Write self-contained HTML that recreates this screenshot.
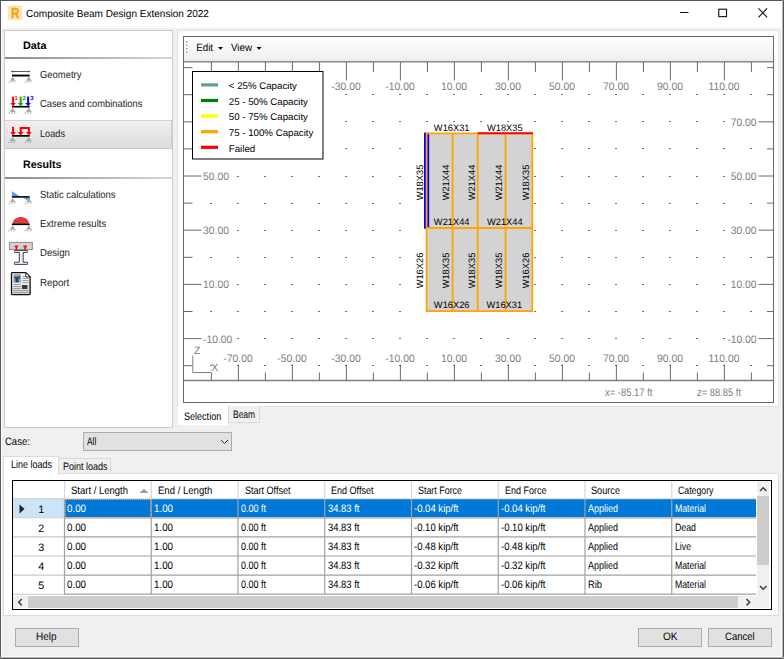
<!DOCTYPE html>
<html><head><meta charset="utf-8"><title>Composite Beam Design Extension 2022</title>
<style>
*{box-sizing:border-box;margin:0;padding:0}
html,body{width:784px;height:659px;overflow:hidden;background:#f0f0f0;font-family:"Liberation Sans",sans-serif;font-size:11px;color:#000;text-rendering:geometricPrecision}
.a{position:absolute}
.t{position:absolute;white-space:nowrap;line-height:1;transform-origin:0 0}
#win{position:absolute;left:0;top:0;width:784px;height:659px;background:#f0f0f0}
#title{left:1px;top:1px;width:781px;height:27px;background:#fff}
.btn{position:absolute;height:19px;width:64px;background:#e1e1e1;border:1px solid #adadad}
</style></head><body>
<div id="win">
<!-- window borders -->
<div class="a" style="left:1px;top:1px;width:1px;height:656px;background:#fafafa"></div>
<div class="a" style="left:781px;top:1px;width:1px;height:656px;background:#fafafa"></div>
<div class="a" style="left:1px;top:656px;width:781px;height:1px;background:#fafafa"></div>
<div class="a" style="left:0;top:0;width:784px;height:1px;background:#555"></div>
<div class="a" style="left:0;top:0;width:1px;height:659px;background:#5a5a5a"></div>
<div class="a" style="left:782px;top:0;width:1px;height:659px;background:#b4b4b4"></div><div class="a" style="left:783px;top:0;width:1px;height:659px;background:#565656"></div>
<div class="a" style="left:0;top:657px;width:784px;height:1px;background:#b4b4b4"></div><div class="a" style="left:0;top:658px;width:784px;height:1px;background:#565656"></div>
<div id="title" class="a"></div>
<!-- title icon -->
<svg class="a" style="left:8px;top:6px" width="14" height="14" viewBox="0 0 14 14"><rect width="14" height="14" fill="#fde4ba"/><text x="2.900" y="12" font-family="Liberation Sans,sans-serif" font-weight="bold" font-size="14.500" textLength="8.400" lengthAdjust="spacingAndGlyphs" fill="#f3a712" stroke="#f3a712" stroke-width="0.400">R</text></svg>
<!-- caption buttons -->
<svg class="a" style="left:670px;top:0" width="112" height="27" viewBox="670 0 112 27" fill="none" stroke="#111" stroke-width="1">
<path d="M680 12.500h8.500"/><rect x="718.800" y="9.200" width="7.700" height="7.400" stroke-width="1.100"/><path d="M758.500 8.300l8.600 9M767.100 8.300l-8.600 9" stroke-width="1.100"/></svg>

<!-- LEFT PANEL -->
<div class="a" id="lp" style="left:4px;top:30px;width:169px;height:398px;background:#fff;border:1px solid #cbcbcb"></div>
<div class="a" style="left:5px;top:57px;width:167px;height:2px;background:linear-gradient(90deg,#8c8c8c,#d8d8d8)"></div>
<div class="a" style="left:5px;top:120px;width:167px;height:29px;background:linear-gradient(#f0f0f0,#dddddd);border-top:1px solid #d2d2d2;border-bottom:1px solid #c8c8c8;border-right:1px solid #cfcfcf"></div>
<div class="a" style="left:5px;top:177px;width:167px;height:2px;background:linear-gradient(90deg,#8c8c8c,#d8d8d8)"></div>
<svg class="a" style="left:6px;top:60px" width="34" height="240" viewBox="6 60 34 240" font-family="Liberation Sans,sans-serif">
<path d="M11.500 71.500H30" stroke="#4a4a4a" stroke-width="0.900" fill="none"/><path d="M11 71.500l1.800-1.300v2.600zM30.400 71.500l-1.800-1.300v2.600z" fill="#4a4a4a"/>
<rect x="12" y="74.600" width="17.700" height="1.900" fill="#000"/>
<path d="M12.6 76.6L9.80 80.80H15.40Z" fill="#a9a9a9"/><path d="M10.10 80.60l-1.600 2.200M12.80 80.60l-1.600 2.200M15.40 80.60l-1.600 2.200" stroke="#a4a4a4" stroke-width="0.900" fill="none"/><path d="M28.8 76.6L26.00 80.80H31.60Z" fill="#a9a9a9"/><path d="M26.30 80.60l-1.600 2.200M29.00 80.60l-1.600 2.200M31.60 80.60l-1.600 2.200" stroke="#a4a4a4" stroke-width="0.900" fill="none"/>
<path d="M13.1 96.6V103.50" stroke="#ff0000" stroke-width="2.000" fill="none"/><path d="M10.25 103.00H15.95L13.1 106.3Z" fill="#ff0000"/><path d="M20.6 96.6V103.50" stroke="#1fa51f" stroke-width="2.000" fill="none"/><path d="M17.75 103.00H23.45L20.6 106.3Z" fill="#1fa51f"/><path d="M28.1 96.6V103.50" stroke="#0000ff" stroke-width="2.000" fill="none"/><path d="M25.25 103.00H30.95L28.1 106.3Z" fill="#0000ff"/>
<rect x="12" y="105.900" width="17.700" height="1.600" fill="#000"/>
<g font-size="6" font-weight="bold"><text x="14.600" y="100" fill="#ff0000">1</text><text x="22.500" y="99.700" fill="#1fa51f">2</text><text x="30.300" y="99.700" fill="#0000ff">3</text></g>
<path d="M12.6 107.7L9.80 111.90H15.40Z" fill="#a9a9a9"/><path d="M10.10 111.70l-1.600 2.200M12.80 111.70l-1.600 2.200M15.40 111.70l-1.600 2.200" stroke="#a4a4a4" stroke-width="0.900" fill="none"/><path d="M28.8 107.7L26.00 111.90H31.60Z" fill="#a9a9a9"/><path d="M26.30 111.70l-1.600 2.200M29.00 111.70l-1.600 2.200M31.60 111.70l-1.600 2.200" stroke="#a4a4a4" stroke-width="0.900" fill="none"/>
<path d="M13.1 126.8V132.60" stroke="#ff0000" stroke-width="2.000" fill="none"/><path d="M10.25 132.10H15.95L13.1 135.4Z" fill="#ff0000"/>
<path d="M20.700 132.500V127.900H28.900V132.500" stroke="#ff0000" stroke-width="2" fill="none"/>
<path d="M17.850 132.100H23.550L20.700 135.400ZM26.050 132.100H31.750L28.900 135.400Z" fill="#ff0000"/>
<rect x="12" y="135" width="17.700" height="1.700" fill="#000"/>
<path d="M12.6 136.9L9.80 141.10H15.40Z" fill="#a9a9a9"/><path d="M10.10 140.90l-1.600 2.200M12.80 140.90l-1.600 2.200M15.40 140.90l-1.600 2.200" stroke="#a4a4a4" stroke-width="0.900" fill="none"/><path d="M28.8 136.9L26.00 141.10H31.60Z" fill="#a9a9a9"/><path d="M26.30 140.90l-1.600 2.200M29.00 140.90l-1.600 2.200M31.60 140.90l-1.600 2.200" stroke="#a4a4a4" stroke-width="0.900" fill="none"/>
<path d="M11.900 191.200V196.300H19.800Z" fill="#4da3f5"/><path d="M30 197.500V202L22.500 197.500Z" fill="#4da3f5"/>
<rect x="11.900" y="196.100" width="17.700" height="1.600" fill="#000"/>
<path d="M12.6 197.9L9.80 202.10H15.40Z" fill="#a9a9a9"/><path d="M10.10 201.90l-1.600 2.200M12.80 201.90l-1.600 2.200M15.40 201.90l-1.600 2.200" stroke="#a4a4a4" stroke-width="0.900" fill="none"/><path d="M28.8 197.9L26.00 202.10H31.60Z" fill="#a9a9a9"/><path d="M26.30 201.90l-1.600 2.200M29.00 201.90l-1.600 2.200M31.60 201.90l-1.600 2.200" stroke="#a4a4a4" stroke-width="0.900" fill="none"/>
<path d="M12.600 223.700C13.300 214.900 28.300 214.900 29 223.700Z" fill="#e23a3a"/>
<rect x="11.900" y="223.500" width="17.700" height="1.600" fill="#000"/>
<path d="M12.6 225.3L9.80 229.50H15.40Z" fill="#a9a9a9"/><path d="M10.10 229.30l-1.600 2.200M12.80 229.30l-1.600 2.200M15.40 229.30l-1.600 2.200" stroke="#a4a4a4" stroke-width="0.900" fill="none"/><path d="M28.8 225.3L26.00 229.50H31.60Z" fill="#a9a9a9"/><path d="M26.30 229.30l-1.600 2.200M29.00 229.30l-1.600 2.200M31.60 229.30l-1.600 2.200" stroke="#a4a4a4" stroke-width="0.900" fill="none"/>
<rect x="9.400" y="242.400" width="22.900" height="7.200" fill="#d2d2d2" stroke="#8a8a8a" stroke-width="1"/>
<path d="M14.600 245.600h3.600v1.700h-1v3.200h-1.600v-3.200h-1zM23.400 245.600h3.600v1.700h-1v3.200h-1.600v-3.200h-1z" fill="#f01010"/>
<path d="M14.700 250.400H27.400Q28 251.400 27.400 252.400H23.200V262.200H27.400Q28 263.300 27.400 264.400H14.700Q14.100 263.300 14.700 262.200H19.300V252.400H14.700Q14.100 251.400 14.700 250.400Z" fill="#eef0f4" stroke="#3a4152" stroke-width="1"/>
<defs><linearGradient id="pg" x1="0" y1="0" x2="0" y2="1"><stop offset="0" stop-color="#ffffff"/><stop offset="1" stop-color="#d4d4d4"/></linearGradient></defs>
<path d="M12.300 272.600H25.800L30.100 277V293.800Q30.100 294.600 29.300 294.600H12.300Q11.500 294.600 11.500 293.800V273.400Q11.500 272.600 12.300 272.600Z" fill="url(#pg)" stroke="#111" stroke-width="1.300"/>
<path d="M25.800 272.600V277H30.100Z" fill="#fff" stroke="#111" stroke-width="0.900"/>
<rect x="13.400" y="274.200" width="7.600" height="8.400" fill="#8aa4c4"/><path d="M14.500 276.500h5.500v2h-1.500v3.800h-3v-3.800h-1z" fill="#2d3f66"/><rect x="15.300" y="274.600" width="3" height="2" fill="#c49a7c"/>
<path d="M22.300 276.500H25M22.300 278.500H28.500M22.300 280.500H28.500M22.300 282.500H28.500M13.400 284.500H21M13.400 286.500H21M13.400 288.500H21M13.400 290.500H28.500M13.400 292.500H28.500" stroke="#8c8c8c" stroke-width="0.800" fill="none"/>
<rect x="22" y="285" width="5.500" height="4" fill="#3a3a3a"/>
</svg>

<!-- RIGHT PANEL -->
<div class="a" style="left:177px;top:30px;width:602px;height:377px;background:#fff;border:1px solid #e3e3e3"></div>
<svg class="a" style="left:183px;top:36px" width="592" height="368" viewBox="183 36 592 368" font-family="Liberation Sans,sans-serif">
<defs><linearGradient id="tbg" x1="0" y1="0" x2="0" y2="1"><stop offset="0" stop-color="#ffffff"/><stop offset="1" stop-color="#eeeeee"/></linearGradient></defs>
<rect x="183.500" y="36.500" width="590" height="366" fill="#fff" stroke="#6a6a6a" stroke-width="1"/>
<rect x="184" y="37" width="589" height="24" fill="url(#tbg)"/>
<rect x="184" y="61" width="589" height="1.500" fill="#8a8a8a"/>
<rect x="186" y="41.00" width="1.500" height="1.500" fill="#a8a8a8"/>
<rect x="186" y="44.50" width="1.500" height="1.500" fill="#a8a8a8"/>
<rect x="186" y="48.00" width="1.500" height="1.500" fill="#a8a8a8"/>
<rect x="186" y="51.50" width="1.500" height="1.500" fill="#a8a8a8"/>
<path d="M210 365h2v1h-2zM210 311h2v1h-2zM210 257h2v1h-2zM210 203h2v1h-2zM210 148h2v1h-2zM210 94h2v1h-2zM237 365h2v1h-2zM237 338h2v1h-2zM237 311h2v1h-2zM237 284h2v1h-2zM237 257h2v1h-2zM237 230h2v1h-2zM237 203h2v1h-2zM237 176h2v1h-2zM237 148h2v1h-2zM237 121h2v1h-2zM237 94h2v1h-2zM264 365h2v1h-2zM264 338h2v1h-2zM264 311h2v1h-2zM264 284h2v1h-2zM264 257h2v1h-2zM264 230h2v1h-2zM264 203h2v1h-2zM264 176h2v1h-2zM264 148h2v1h-2zM264 121h2v1h-2zM264 94h2v1h-2zM291 365h2v1h-2zM291 338h2v1h-2zM291 311h2v1h-2zM291 284h2v1h-2zM291 257h2v1h-2zM291 230h2v1h-2zM291 203h2v1h-2zM291 176h2v1h-2zM291 148h2v1h-2zM291 121h2v1h-2zM291 94h2v1h-2zM318 365h2v1h-2zM318 338h2v1h-2zM318 311h2v1h-2zM318 284h2v1h-2zM318 257h2v1h-2zM318 230h2v1h-2zM318 203h2v1h-2zM318 176h2v1h-2zM318 148h2v1h-2zM318 121h2v1h-2zM318 94h2v1h-2zM345 365h2v1h-2zM345 338h2v1h-2zM345 311h2v1h-2zM345 284h2v1h-2zM345 257h2v1h-2zM345 230h2v1h-2zM345 203h2v1h-2zM345 176h2v1h-2zM345 148h2v1h-2zM345 121h2v1h-2zM345 94h2v1h-2zM372 365h2v1h-2zM372 338h2v1h-2zM372 311h2v1h-2zM372 284h2v1h-2zM372 257h2v1h-2zM372 230h2v1h-2zM372 203h2v1h-2zM372 176h2v1h-2zM372 148h2v1h-2zM372 121h2v1h-2zM372 94h2v1h-2zM399 365h2v1h-2zM399 338h2v1h-2zM399 311h2v1h-2zM399 284h2v1h-2zM399 257h2v1h-2zM399 230h2v1h-2zM399 203h2v1h-2zM399 176h2v1h-2zM399 148h2v1h-2zM399 121h2v1h-2zM399 94h2v1h-2zM426 365h2v1h-2zM426 338h2v1h-2zM426 311h2v1h-2zM426 284h2v1h-2zM426 257h2v1h-2zM426 230h2v1h-2zM426 203h2v1h-2zM426 176h2v1h-2zM426 148h2v1h-2zM426 121h2v1h-2zM426 94h2v1h-2zM453 365h2v1h-2zM453 338h2v1h-2zM453 311h2v1h-2zM453 284h2v1h-2zM453 257h2v1h-2zM453 230h2v1h-2zM453 203h2v1h-2zM453 176h2v1h-2zM453 148h2v1h-2zM453 121h2v1h-2zM453 94h2v1h-2zM480 365h2v1h-2zM480 338h2v1h-2zM480 311h2v1h-2zM480 284h2v1h-2zM480 257h2v1h-2zM480 230h2v1h-2zM480 203h2v1h-2zM480 176h2v1h-2zM480 148h2v1h-2zM480 121h2v1h-2zM480 94h2v1h-2zM507 365h2v1h-2zM507 338h2v1h-2zM507 311h2v1h-2zM507 284h2v1h-2zM507 257h2v1h-2zM507 230h2v1h-2zM507 203h2v1h-2zM507 176h2v1h-2zM507 148h2v1h-2zM507 121h2v1h-2zM507 94h2v1h-2zM534 365h2v1h-2zM534 338h2v1h-2zM534 311h2v1h-2zM534 284h2v1h-2zM534 257h2v1h-2zM534 230h2v1h-2zM534 203h2v1h-2zM534 176h2v1h-2zM534 148h2v1h-2zM534 121h2v1h-2zM534 94h2v1h-2zM561 365h2v1h-2zM561 338h2v1h-2zM561 311h2v1h-2zM561 284h2v1h-2zM561 257h2v1h-2zM561 230h2v1h-2zM561 203h2v1h-2zM561 176h2v1h-2zM561 148h2v1h-2zM561 121h2v1h-2zM561 94h2v1h-2zM588 365h2v1h-2zM588 338h2v1h-2zM588 311h2v1h-2zM588 284h2v1h-2zM588 257h2v1h-2zM588 230h2v1h-2zM588 203h2v1h-2zM588 176h2v1h-2zM588 148h2v1h-2zM588 121h2v1h-2zM588 94h2v1h-2zM615 365h2v1h-2zM615 338h2v1h-2zM615 311h2v1h-2zM615 284h2v1h-2zM615 257h2v1h-2zM615 230h2v1h-2zM615 203h2v1h-2zM615 176h2v1h-2zM615 148h2v1h-2zM615 121h2v1h-2zM615 94h2v1h-2zM642 365h2v1h-2zM642 338h2v1h-2zM642 311h2v1h-2zM642 284h2v1h-2zM642 257h2v1h-2zM642 230h2v1h-2zM642 203h2v1h-2zM642 176h2v1h-2zM642 148h2v1h-2zM642 121h2v1h-2zM642 94h2v1h-2zM669 365h2v1h-2zM669 338h2v1h-2zM669 311h2v1h-2zM669 284h2v1h-2zM669 257h2v1h-2zM669 230h2v1h-2zM669 203h2v1h-2zM669 176h2v1h-2zM669 148h2v1h-2zM669 121h2v1h-2zM669 94h2v1h-2zM696 365h2v1h-2zM696 338h2v1h-2zM696 311h2v1h-2zM696 284h2v1h-2zM696 257h2v1h-2zM696 230h2v1h-2zM696 203h2v1h-2zM696 176h2v1h-2zM696 148h2v1h-2zM696 121h2v1h-2zM696 94h2v1h-2zM723 365h2v1h-2zM723 338h2v1h-2zM723 311h2v1h-2zM723 284h2v1h-2zM723 257h2v1h-2zM723 230h2v1h-2zM723 203h2v1h-2zM723 176h2v1h-2zM723 148h2v1h-2zM723 121h2v1h-2zM723 94h2v1h-2zM750 365h2v1h-2zM750 311h2v1h-2zM750 257h2v1h-2zM750 203h2v1h-2zM750 148h2v1h-2zM750 94h2v1h-2z" fill="#707070"/>
<path d="M184 380.500H773" stroke="#808080" stroke-width="1.300" fill="none"/>
<path d="M211.40 62V72M211.40 380V372.500M238.40 62V80.500M238.40 380V364.500M265.40 62V72M265.40 380V372.500M292.40 62V80.500M292.40 380V364.500M319.40 62V72M319.40 380V372.500M346.40 62V80.500M346.40 380V364.500M373.40 62V72M373.40 380V372.500M400.40 62V80.500M400.40 380V364.500M427.40 62V72M427.40 380V372.500M454.40 62V80.500M454.40 380V364.500M481.40 62V72M481.40 380V372.500M508.40 62V80.500M508.40 380V364.500M535.40 62V72M535.40 380V372.500M562.40 62V80.500M562.40 380V364.500M589.40 62V72M589.40 380V372.500M616.40 62V80.500M616.40 380V364.500M643.40 62V72M643.40 380V372.500M670.40 62V80.500M670.40 380V364.500M697.40 62V72M697.40 380V372.500M724.40 62V80.500M724.40 380V364.500M751.40 62V72M751.40 380V372.500M184 365.70H192.500M773 365.70H767M184 338.60H201.500M773 338.60H758.500M184 311.50H192.500M773 311.50H767M184 284.40H201.500M773 284.40H758.500M184 257.30H192.500M773 257.30H767M184 230.20H201.500M773 230.20H758.500M184 203.10H192.500M773 203.10H767M184 176.00H201.500M773 176.00H758.500M184 148.90H192.500M773 148.90H767M184 121.80H201.500M773 121.80H758.500M184 94.70H192.500M773 94.70H767M184 67.60H192.500M773 67.60H767" stroke="#6a6a6a" stroke-width="1" fill="none"/>
<g fill="#808080">
<text x="346.00" y="90.00" font-size="10.9" textLength="29.36" lengthAdjust="spacingAndGlyphs" text-anchor="middle">-30.00</text>
<text x="400.00" y="90.00" font-size="10.9" textLength="29.36" lengthAdjust="spacingAndGlyphs" text-anchor="middle">-10.00</text>
<text x="454.00" y="90.00" font-size="10.9" textLength="25.91" lengthAdjust="spacingAndGlyphs" text-anchor="middle">10.00</text>
<text x="508.00" y="90.00" font-size="10.9" textLength="25.91" lengthAdjust="spacingAndGlyphs" text-anchor="middle">30.00</text>
<text x="562.00" y="90.00" font-size="10.9" textLength="25.91" lengthAdjust="spacingAndGlyphs" text-anchor="middle">50.00</text>
<text x="616.00" y="90.00" font-size="10.9" textLength="25.91" lengthAdjust="spacingAndGlyphs" text-anchor="middle">70.00</text>
<text x="670.00" y="90.00" font-size="10.9" textLength="25.91" lengthAdjust="spacingAndGlyphs" text-anchor="middle">90.00</text>
<text x="724.00" y="90.00" font-size="10.9" textLength="30.90" lengthAdjust="spacingAndGlyphs" text-anchor="middle">110.00</text>
<text x="238.00" y="361.70" font-size="10.9" textLength="29.36" lengthAdjust="spacingAndGlyphs" text-anchor="middle">-70.00</text>
<text x="292.00" y="361.70" font-size="10.9" textLength="29.36" lengthAdjust="spacingAndGlyphs" text-anchor="middle">-50.00</text>
<text x="346.00" y="361.70" font-size="10.9" textLength="29.36" lengthAdjust="spacingAndGlyphs" text-anchor="middle">-30.00</text>
<text x="400.00" y="361.70" font-size="10.9" textLength="29.36" lengthAdjust="spacingAndGlyphs" text-anchor="middle">-10.00</text>
<text x="454.00" y="361.70" font-size="10.9" textLength="25.91" lengthAdjust="spacingAndGlyphs" text-anchor="middle">10.00</text>
<text x="508.00" y="361.70" font-size="10.9" textLength="25.91" lengthAdjust="spacingAndGlyphs" text-anchor="middle">30.00</text>
<text x="562.00" y="361.70" font-size="10.9" textLength="25.91" lengthAdjust="spacingAndGlyphs" text-anchor="middle">50.00</text>
<text x="616.00" y="361.70" font-size="10.9" textLength="25.91" lengthAdjust="spacingAndGlyphs" text-anchor="middle">70.00</text>
<text x="670.00" y="361.70" font-size="10.9" textLength="25.91" lengthAdjust="spacingAndGlyphs" text-anchor="middle">90.00</text>
<text x="724.00" y="361.70" font-size="10.9" textLength="30.90" lengthAdjust="spacingAndGlyphs" text-anchor="middle">110.00</text>
<text x="756.60" y="125.70" font-size="10.9" textLength="25.91" lengthAdjust="spacingAndGlyphs" text-anchor="end">70.00</text>
<text x="203.00" y="179.90" font-size="10.9" textLength="25.91" lengthAdjust="spacingAndGlyphs">50.00</text>
<text x="756.60" y="179.90" font-size="10.9" textLength="25.91" lengthAdjust="spacingAndGlyphs" text-anchor="end">50.00</text>
<text x="203.00" y="234.10" font-size="10.9" textLength="25.91" lengthAdjust="spacingAndGlyphs">30.00</text>
<text x="756.60" y="234.10" font-size="10.9" textLength="25.91" lengthAdjust="spacingAndGlyphs" text-anchor="end">30.00</text>
<text x="203.00" y="288.30" font-size="10.9" textLength="25.91" lengthAdjust="spacingAndGlyphs">10.00</text>
<text x="756.60" y="288.30" font-size="10.9" textLength="25.91" lengthAdjust="spacingAndGlyphs" text-anchor="end">10.00</text>
<text x="203.00" y="342.50" font-size="10.9" textLength="29.36" lengthAdjust="spacingAndGlyphs">-10.00</text>
<text x="756.60" y="342.50" font-size="10.9" textLength="29.36" lengthAdjust="spacingAndGlyphs" text-anchor="end">-10.00</text>
<text x="194.00" y="354.30" font-size="10.5">Z</text>
<text x="211.30" y="371.00" font-size="10.5">X</text>
<text x="605.00" y="396.30" font-size="10.9" textLength="47.50" lengthAdjust="spacingAndGlyphs">x= -85.17 ft</text>
<text x="697.00" y="396.30" font-size="10.9" textLength="44.00" lengthAdjust="spacingAndGlyphs">z= 88.85 ft</text>
</g>
<path d="M192.800 355.500V372.500H211" stroke="#808080" stroke-width="1" fill="none"/>
<rect x="426.6" y="133.3" width="105.70" height="177.80" fill="#d3d3d3"/>
<path d="M426.6 132.60V228.70" stroke="#0000ff" stroke-width="5.200"/>
<path d="M426.6 132.60V311.80M452.6 132.60V311.80M477.7 132.60V311.80M505.5 132.60V311.80M532.3 132.60V311.80M425.90 133.3H533.00M425.90 228.0H533.00M425.90 311.1H533.00" stroke="#ffa500" stroke-width="1.800" fill="none"/>
<path d="M477.7 133.3H533.00" stroke="#ff0000" stroke-width="1.900"/>
<g fill="#000">
<text x="451.70" y="130.70" font-size="9.3" text-anchor="middle">W16X31</text>
<text x="504.80" y="130.70" font-size="9.3" text-anchor="middle">W18X35</text>
<text x="451.70" y="225.00" font-size="9.3" text-anchor="middle">W21X44</text>
<text x="504.80" y="225.00" font-size="9.3" text-anchor="middle">W21X44</text>
<text x="451.70" y="308.00" font-size="9.3" text-anchor="middle">W16X26</text>
<text x="504.30" y="308.00" font-size="9.3" text-anchor="middle">W16X31</text>
<text transform="translate(423.30 182.50) rotate(-90)" font-size="9.3" text-anchor="middle">W18X35</text>
<text transform="translate(423.30 270.50) rotate(-90)" font-size="9.3" text-anchor="middle">W16X26</text>
<text transform="translate(449.00 182.50) rotate(-90)" font-size="9.3" text-anchor="middle">W21X44</text>
<text transform="translate(449.00 270.50) rotate(-90)" font-size="9.3" text-anchor="middle">W18X35</text>
<text transform="translate(474.60 182.50) rotate(-90)" font-size="9.3" text-anchor="middle">W21X44</text>
<text transform="translate(474.60 270.50) rotate(-90)" font-size="9.3" text-anchor="middle">W18X35</text>
<text transform="translate(502.30 182.50) rotate(-90)" font-size="9.3" text-anchor="middle">W21X44</text>
<text transform="translate(502.30 270.50) rotate(-90)" font-size="9.3" text-anchor="middle">W18X35</text>
<text transform="translate(529.30 182.50) rotate(-90)" font-size="9.3" text-anchor="middle">W18X35</text>
<text transform="translate(529.30 270.50) rotate(-90)" font-size="9.3" text-anchor="middle">W16X26</text>
</g>
<rect x="192.500" y="71.500" width="130.500" height="87.500" fill="#fff" stroke="#000" stroke-width="1"/>
<g fill="#000">
<rect x="201" y="83.30" width="17" height="3.200" fill="#5f9ea0"/>
<text x="228.80" y="89.30" font-size="9.7">&lt; 25% Capacity</text>
<rect x="201" y="98.90" width="17" height="3.200" fill="#008000"/>
<text x="228.80" y="104.88" font-size="9.7">25 - 50% Capacity</text>
<rect x="201" y="114.50" width="17" height="3.200" fill="#ffff00"/>
<text x="228.80" y="120.46" font-size="9.7">50 - 75% Capacity</text>
<rect x="201" y="130.10" width="17" height="3.200" fill="#ffa500"/>
<text x="228.80" y="136.04" font-size="9.7">75 - 100% Capacity</text>
<rect x="201" y="145.70" width="17" height="3.200" fill="#ff0000"/>
<text x="228.80" y="151.62" font-size="9.7">Failed</text>
</g>
<g fill="#000"><text x="196.20" y="50.60" font-size="10.5" textLength="16.83" lengthAdjust="spacingAndGlyphs">Edit</text><text x="231.00" y="50.60" font-size="10.5" textLength="20.99" lengthAdjust="spacingAndGlyphs">View</text></g>
<path d="M218 47h5l-2.500 2.800zM256.500 47h5l-2.500 2.800z" fill="#000"/>
</svg>

<!-- bottom tabs of right panel -->
<div class="a" style="left:178px;top:406px;width:50px;height:19px;background:#fff"></div>
<div class="a" style="left:228px;top:406px;width:32px;height:17px;background:#f0f0f0;border:1px solid #d9d9d9;border-top:none"></div>

<!-- Case -->
<div class="a" style="left:83px;top:432px;width:149px;height:19px;background:#e1e1e1;border:1px solid #adadad"></div>
<svg class="a" style="left:220px;top:439px" width="10" height="7" viewBox="0 0 10 7" fill="none" stroke="#333" stroke-width="1"><path d="M1 1l3.500 3.500 3.500-3.500"/></svg>

<!-- Lower tab control -->
<div class="a" style="left:3px;top:473px;width:776px;height:143px;background:#fff;border:1px solid #dcdcdc"></div>
<div class="a" style="left:3px;top:456px;width:56px;height:19px;background:#fff;border:1px solid #dcdcdc;border-bottom:none"></div>
<div class="a" style="left:58px;top:458px;width:53px;height:15px;background:#f0f0f0;border:1px solid #d9d9d9;border-bottom:none"></div>
<div class="a" style="left:12px;top:480px;width:760px;height:130px;background:#fff;border:1px solid #000"></div>
<div class="a" style="left:13px;top:499px;width:51px;height:18px;background:#cce4f7"></div>
<div class="a" style="left:65px;top:499px;width:691px;height:18px;background:#0078d7"></div>
<svg class="a" style="left:12px;top:480px" width="760" height="130" viewBox="12 480 760 130"><path d="M64.50 481V498.200M151.25 481V498.200M238.00 481V498.200M324.75 481V498.200M411.50 481V498.200M498.25 481V498.200M585.00 481V498.200M671.75 481V498.200" stroke="#d6d6d6" stroke-width="1.200" fill="none"/><path d="M64.50 498.200V594.80M151.25 498.200V594.80M238.00 498.200V594.80M324.75 498.200V594.80M411.50 498.200V594.80M498.25 498.200V594.80M585.00 498.200V594.80M671.75 498.200V594.80" stroke="#a2a2a2" stroke-width="1.200" fill="none"/><path d="M13 498.70H64M13 517.80H64M13 536.90H64M13 556.00H64M13 575.10H64M13 594.20H64" stroke="#cacaca" stroke-width="1.100" fill="none"/><path d="M64 517.80H756M64 536.90H756M64 556.00H756M64 575.10H756M64 594.20H756" stroke="#a2a2a2" stroke-width="1.200" fill="none"/><path d="M64 498.700H756" stroke="#d6d6d6" stroke-width="1.100" fill="none"/></svg>
<div class="a" style="left:65px;top:499px;width:86px;height:19px;border:1px dotted #e8a66a"></div>
<svg class="a" style="left:139px;top:488px" width="10" height="6" viewBox="0 0 10 6"><path d="M0.500 5L5 0.500L9.500 5z" fill="#a0a0a0"/></svg>
<svg class="a" style="left:19px;top:504px" width="6" height="10" viewBox="0 0 6 10"><path d="M0.500 0.500L5.500 5L0.500 9.500z" fill="#222"/></svg>
<div class="a" style="left:757px;top:481px;width:12px;height:115px;background:#f0f0f0"></div>
<div class="a" style="left:757px;top:496px;width:12px;height:69px;background:#cdcdcd"></div>
<div class="a" style="left:13px;top:596px;width:756px;height:12px;background:#f0f0f0"></div>
<div class="a" style="left:28px;top:596px;width:710px;height:12px;background:#cdcdcd"></div>
<svg class="a" style="left:757px;top:481px" width="12" height="115" viewBox="0 0 12 115" fill="none" stroke="#404040" stroke-width="1.500"><path d="M3 10l3.200-3.200 3.200 3.200M3 105l3.200 3.200 3.200-3.200"/></svg>
<svg class="a" style="left:13px;top:596px" width="744" height="12" viewBox="0 0 744 12" fill="none" stroke="#404040" stroke-width="1.500"><path d="M8.800 3l-3.200 3.200 3.200 3.200M733.500 3l3.200 3.200-3.200 3.200"/></svg>

<!-- Buttons -->
<div class="btn" style="left:15px;top:628px"></div>
<div class="btn" style="left:638px;top:628px"></div>
<div class="btn" style="left:708px;top:628px"></div>
<div class="t" style="left:26.00px;top:10.00px;font-size:10.3px;transform:scaleX(0.9745)">Composite Beam Design Extension 2022</div>
<div class="t" style="left:23.00px;top:41.00px;font-size:10.8px;font-weight:bold;transform:scaleX(1.0040)">Data</div>
<div class="t" style="left:23.00px;top:160.00px;font-size:10.8px;font-weight:bold;transform:scaleX(0.9869)">Results</div>
<div class="t" style="left:40.20px;top:71.00px;font-size:10.3px;color:#1e1e1e;transform:scaleX(0.9178)">Geometry</div>
<div class="t" style="left:40.00px;top:100.00px;font-size:10.3px;color:#1e1e1e;transform:scaleX(0.9079)">Cases and combinations</div>
<div class="t" style="left:40.00px;top:130.00px;font-size:10.3px;color:#1e1e1e;transform:scaleX(0.8909)">Loads</div>
<div class="t" style="left:40.10px;top:191.00px;font-size:10.3px;color:#1e1e1e;transform:scaleX(0.9171)">Static calculations</div>
<div class="t" style="left:40.00px;top:220.00px;font-size:10.3px;color:#1e1e1e;transform:scaleX(0.9253)">Extreme results</div>
<div class="t" style="left:40.00px;top:249.00px;font-size:10.3px;color:#1e1e1e;transform:scaleX(0.9326)">Design</div>
<div class="t" style="left:40.00px;top:279.00px;font-size:10.3px;color:#1e1e1e;transform:scaleX(0.9478)">Report</div>
<div class="t" style="left:184.00px;top:412.00px;font-size:10.8px;transform:scaleX(0.8373)">Selection</div>
<div class="t" style="left:232.90px;top:410.00px;font-size:10.8px;transform:scaleX(0.7834)">Beam</div>
<div class="t" style="left:5.20px;top:437.00px;font-size:10.8px;transform:scaleX(0.8791)">Case:</div>
<div class="t" style="left:86.70px;top:437.00px;font-size:10.8px;transform:scaleX(0.7748)">All</div>
<div class="t" style="left:10.70px;top:460.00px;font-size:10.8px;transform:scaleX(0.8307)">Line loads</div>
<div class="t" style="left:62.50px;top:462.00px;font-size:10.8px;transform:scaleX(0.8328)">Point loads</div>
<div class="t" style="left:36.00px;top:632.00px;font-size:10.8px;transform:scaleX(0.9230)">Help</div>
<div class="t" style="left:663.00px;top:632.00px;font-size:10.8px;transform:scaleX(0.9292)">OK</div>
<div class="t" style="left:724.70px;top:632.00px;font-size:10.8px;transform:scaleX(0.8835)">Cancel</div>
<div class="t" style="left:71.00px;top:486.00px;font-size:10.8px;transform:scaleX(0.8791)">Start / Length</div>
<div class="t" style="left:157.50px;top:486.00px;font-size:10.8px;transform:scaleX(0.8850)">End / Length</div>
<div class="t" style="left:244.50px;top:486.00px;font-size:10.8px;transform:scaleX(0.8361)">Start Offset</div>
<div class="t" style="left:331.00px;top:486.00px;font-size:10.8px;transform:scaleX(0.8362)">End Offset</div>
<div class="t" style="left:418.00px;top:486.00px;font-size:10.8px;transform:scaleX(0.8238)">Start Force</div>
<div class="t" style="left:504.50px;top:486.00px;font-size:10.8px;transform:scaleX(0.8330)">End Force</div>
<div class="t" style="left:591.00px;top:486.00px;font-size:10.8px;transform:scaleX(0.8475)">Source</div>
<div class="t" style="left:677.50px;top:486.00px;font-size:10.8px;transform:scaleX(0.8101)">Category</div>
<div class="t" style="left:38.30px;top:505.00px;font-size:10.8px">1</div>
<div class="t" style="left:67.00px;top:504.00px;font-size:10.8px;color:#fff;transform:scaleX(0.9040)">0.00</div>
<div class="t" style="left:154.00px;top:504.00px;font-size:10.8px;color:#fff;transform:scaleX(0.9040)">1.00</div>
<div class="t" style="left:241.00px;top:504.00px;font-size:10.8px;color:#fff;transform:scaleX(0.8328)">0.00 ft</div>
<div class="t" style="left:327.50px;top:504.00px;font-size:10.8px;color:#fff;transform:scaleX(0.8744)">34.83 ft</div>
<div class="t" style="left:414.00px;top:504.00px;font-size:10.8px;color:#fff;transform:scaleX(0.8826)">-0.04 kip/ft</div>
<div class="t" style="left:501.00px;top:504.00px;font-size:10.8px;color:#fff;transform:scaleX(0.8826)">-0.04 kip/ft</div>
<div class="t" style="left:588.00px;top:504.00px;font-size:10.8px;color:#fff;transform:scaleX(0.8327)">Applied</div>
<div class="t" style="left:675.00px;top:504.00px;font-size:10.8px;color:#fff;transform:scaleX(0.8071)">Material</div>
<div class="t" style="left:38.30px;top:524.00px;font-size:10.8px">2</div>
<div class="t" style="left:67.00px;top:523.00px;font-size:10.8px;transform:scaleX(0.9040)">0.00</div>
<div class="t" style="left:154.00px;top:523.00px;font-size:10.8px;transform:scaleX(0.9040)">1.00</div>
<div class="t" style="left:241.00px;top:523.00px;font-size:10.8px;transform:scaleX(0.8328)">0.00 ft</div>
<div class="t" style="left:327.50px;top:523.00px;font-size:10.8px;transform:scaleX(0.8744)">34.83 ft</div>
<div class="t" style="left:414.00px;top:523.00px;font-size:10.8px;transform:scaleX(0.8826)">-0.10 kip/ft</div>
<div class="t" style="left:501.00px;top:523.00px;font-size:10.8px;transform:scaleX(0.8826)">-0.10 kip/ft</div>
<div class="t" style="left:588.00px;top:523.00px;font-size:10.8px;transform:scaleX(0.8327)">Applied</div>
<div class="t" style="left:675.00px;top:523.00px;font-size:10.8px;transform:scaleX(0.8134)">Dead</div>
<div class="t" style="left:38.30px;top:543.00px;font-size:10.8px">3</div>
<div class="t" style="left:67.00px;top:542.00px;font-size:10.8px;transform:scaleX(0.9040)">0.00</div>
<div class="t" style="left:154.00px;top:542.00px;font-size:10.8px;transform:scaleX(0.9040)">1.00</div>
<div class="t" style="left:241.00px;top:542.00px;font-size:10.8px;transform:scaleX(0.8328)">0.00 ft</div>
<div class="t" style="left:327.50px;top:542.00px;font-size:10.8px;transform:scaleX(0.8744)">34.83 ft</div>
<div class="t" style="left:414.00px;top:542.00px;font-size:10.8px;transform:scaleX(0.8826)">-0.48 kip/ft</div>
<div class="t" style="left:501.00px;top:542.00px;font-size:10.8px;transform:scaleX(0.8826)">-0.48 kip/ft</div>
<div class="t" style="left:588.00px;top:542.00px;font-size:10.8px;transform:scaleX(0.8327)">Applied</div>
<div class="t" style="left:675.00px;top:542.00px;font-size:10.8px;transform:scaleX(0.8076)">Live</div>
<div class="t" style="left:38.30px;top:562.00px;font-size:10.8px">4</div>
<div class="t" style="left:67.00px;top:561.00px;font-size:10.8px;transform:scaleX(0.9040)">0.00</div>
<div class="t" style="left:154.00px;top:561.00px;font-size:10.8px;transform:scaleX(0.9040)">1.00</div>
<div class="t" style="left:241.00px;top:561.00px;font-size:10.8px;transform:scaleX(0.8328)">0.00 ft</div>
<div class="t" style="left:327.50px;top:561.00px;font-size:10.8px;transform:scaleX(0.8744)">34.83 ft</div>
<div class="t" style="left:414.00px;top:561.00px;font-size:10.8px;transform:scaleX(0.8826)">-0.32 kip/ft</div>
<div class="t" style="left:501.00px;top:561.00px;font-size:10.8px;transform:scaleX(0.8826)">-0.32 kip/ft</div>
<div class="t" style="left:588.00px;top:561.00px;font-size:10.8px;transform:scaleX(0.8327)">Applied</div>
<div class="t" style="left:675.00px;top:561.00px;font-size:10.8px;transform:scaleX(0.8071)">Material</div>
<div class="t" style="left:38.30px;top:581.00px;font-size:10.8px">5</div>
<div class="t" style="left:67.00px;top:580.00px;font-size:10.8px;transform:scaleX(0.9040)">0.00</div>
<div class="t" style="left:154.00px;top:580.00px;font-size:10.8px;transform:scaleX(0.9040)">1.00</div>
<div class="t" style="left:241.00px;top:580.00px;font-size:10.8px;transform:scaleX(0.8328)">0.00 ft</div>
<div class="t" style="left:327.50px;top:580.00px;font-size:10.8px;transform:scaleX(0.8744)">34.83 ft</div>
<div class="t" style="left:414.00px;top:580.00px;font-size:10.8px;transform:scaleX(0.8826)">-0.06 kip/ft</div>
<div class="t" style="left:501.00px;top:580.00px;font-size:10.8px;transform:scaleX(0.8826)">-0.06 kip/ft</div>
<div class="t" style="left:588.00px;top:580.00px;font-size:10.8px;transform:scaleX(0.8639)">Rib</div>
<div class="t" style="left:675.00px;top:580.00px;font-size:10.8px;transform:scaleX(0.8071)">Material</div>
</div>
</body></html>
